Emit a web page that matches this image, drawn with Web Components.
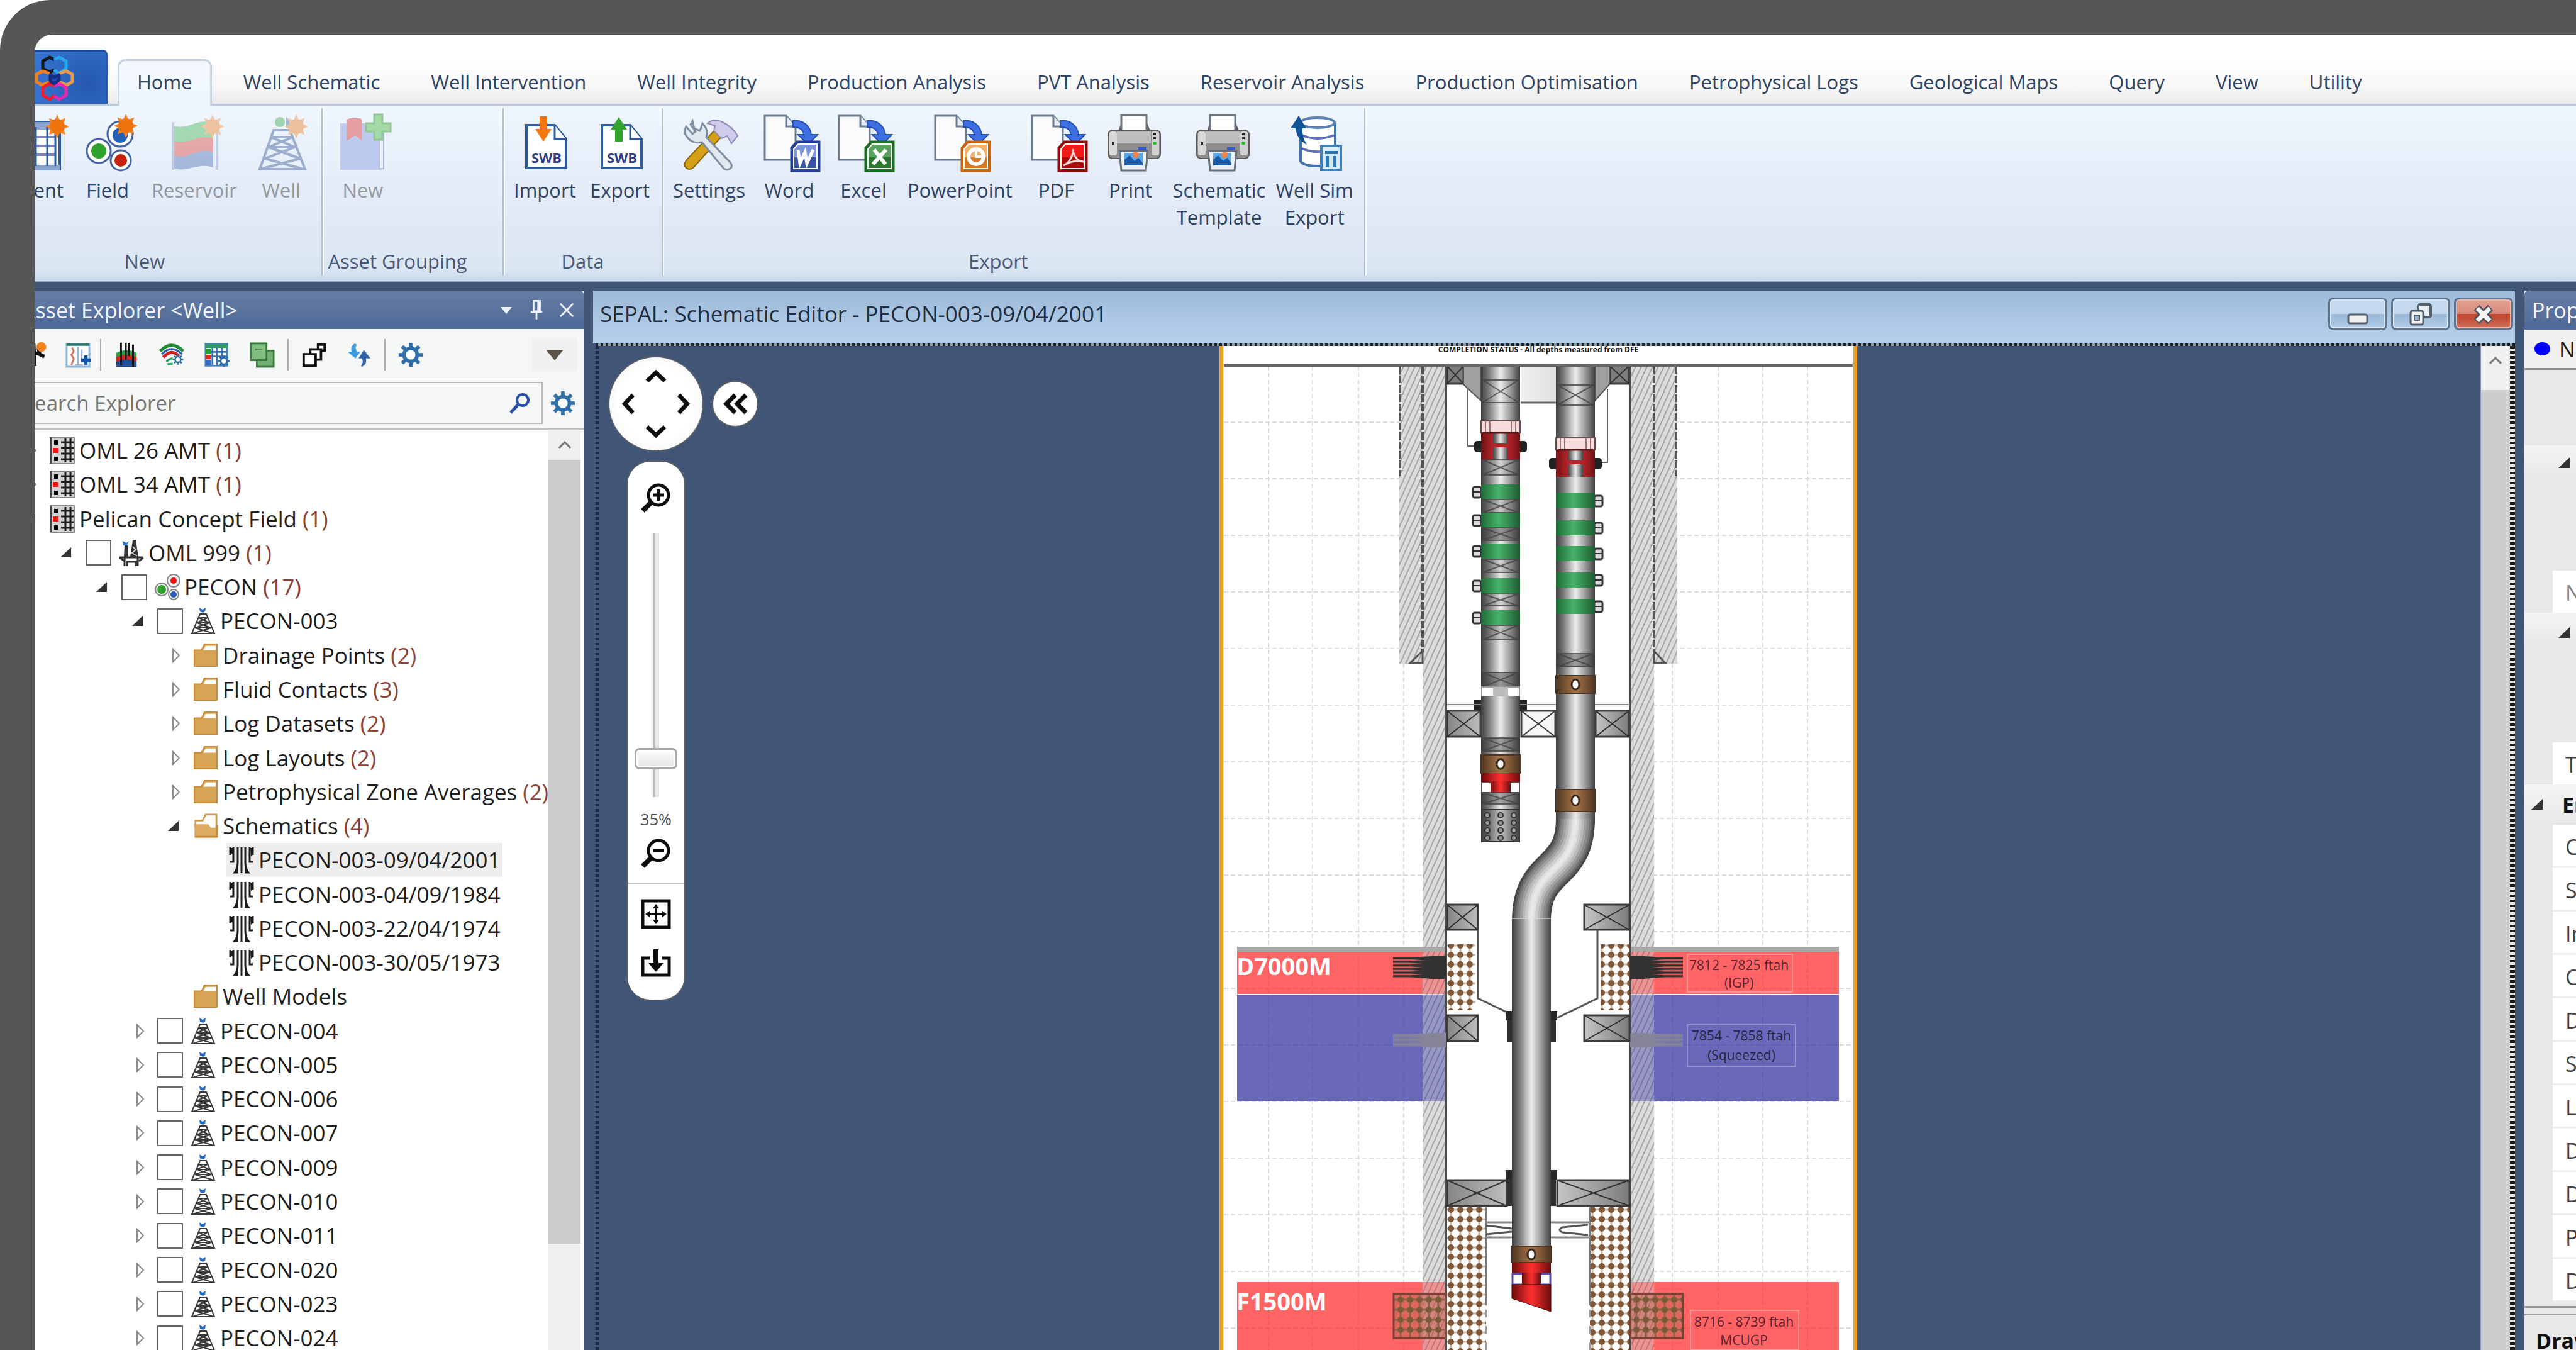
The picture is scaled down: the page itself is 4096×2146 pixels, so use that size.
<!DOCTYPE html>
<html lang="en">
<head>
<meta charset="utf-8">
<title>SEPAL</title>
<style>
	html, body { margin: 0; height: 100%; background: #fff; }
	body { font-family: 'Open Sans', 'Noto Sans', sans-serif; overflow: hidden; }
</style>
</head>
<body>
<sepal-app></sepal-app>

<script>
const sun = (x, y, r = 12) => {
	let rays = '';
	for (let a = 0; a < 8; a++) {
		rays += `<path d="M-4 ${-r + 2}L0 ${-r - 7}L4 ${-r + 2}z" transform="translate(${x} ${y}) rotate(${a * 45})" fill="#f58220"/>`;
	}
	return `${rays}<circle cx="${x}" cy="${y}" r="${r}" fill="#f0740c"/>`;
};

const gear = (x, y, s, color = '#2f6ea8') => {
	let teeth = '';
	for (let a = 0; a < 8; a++) {
		teeth += `<rect x="-3" y="-20" width="6" height="9" transform="rotate(${a * 45})" fill="${color}"/>`;
	}
	return `<g transform="translate(${x} ${y}) scale(${s})">${teeth}<circle r="11" fill="#fff" stroke="${color}" stroke-width="6"/></g>`;
};

const derrick = (color, w = 4) => `
	<g fill="none" stroke="${color}" stroke-width="${w}">
		<path d="M34 25h26L84 87H12zM30 36L68 52M64 36L26 52M26 52L76 70M68 52L20 70M20 70L82 87M76 70L12 87M30 36h34M26 52h42"/>
	</g>`;

const officeDoc = (top, bottom, mark) => `
	<path d="M7 2h34l15 17v53H7z" fill="#fcfcff" stroke="#6c7c90" stroke-width="3"/>
	<path d="M41 2v17h15" fill="#e6ebf5" stroke="#6c7c90" stroke-width="3"/>
	<path d="M52 10c16-2 27 8 29 22h10L76 48 60 32h9c-1-8-6-12-17-12z" fill="#3f6fe0" stroke="#2450b8" stroke-width="2"/>
	<path d="M58 43h36v47H49V53z" fill="${bottom}" stroke="${bottom}" stroke-width="3"/>
	<path d="M60 47h30v39H53V55z" fill="${top}" stroke="#fff" stroke-width="2"/>
	<path d="M54 68h35v17H54z" fill="${bottom}" opacity=".75"/>
	${mark}`;

const printer = `
	<path d="M26 26l7-18h37l7 18z" fill="#5c5f66"/>
	<path d="M31 1h40v29H31z" fill="#fff" stroke="#6c7580" stroke-width="3"/>
	<rect x="10" y="25" width="83" height="45" rx="7" fill="#8e8e8e" stroke="#5a5a5a" stroke-width="2"/>
	<rect x="24" y="27" width="54" height="19" fill="#bdbdbd"/>
	<rect x="12" y="27" width="12" height="38" rx="4" fill="#d8d8d8"/>
	<rect x="79" y="27" width="12" height="38" rx="4" fill="#d0d0d0"/>
	<path d="M18 44v4M84 30v3M84 36v3" stroke="#222" stroke-width="4"/>
	<path d="M84 43v5" stroke="#2bc62b" stroke-width="5"/>
	<rect x="58" y="52" width="13" height="6" fill="#3355d0"/>
	<path d="M28 58h45l-3 31H31z" fill="#edf1f5" stroke="#66707c" stroke-width="3"/>
	<path d="M36 61h29v20H36z" fill="#58a9e6"/>
	<path d="M36 81V72l8-7 8 9 6-5 7 8v4z" fill="#1f5aa8"/>
	<circle cx="54" cy="64" r="5" fill="#f0824a"/>`;

const swbPage = (arrow) => `
	<path d="M17 17h45l18 22v46H17z" fill="#fff" stroke="#2c5a9c" stroke-width="4"/>
	<path d="M62 17v22h18" fill="#fff" stroke="#2c5a9c" stroke-width="3"/>
	${arrow}
	<text x="49" y="77" text-anchor="middle" font-size="22" font-weight="700" fill="#2c3f86" font-family="Open Sans, sans-serif">SWB</text>`;

const chevron = (d) => `<path d="${d}" fill="none" stroke="#0c0c0c" stroke-width="7"/>`;

// every entry: [viewBox, markup]
const ICONS = {
	'grid-new': ['0 0 92 92', `
		<path d="M4 12h82v75H4z" fill="#fff" stroke="#2c5a9c" stroke-width="4"/>
		<path d="M4 12h82v12H4zM4 80h82v8H4z" fill="#8aa4d0"/>
		<path d="M4 36h76M4 50h76M4 64h76" stroke="#7d82b8" stroke-width="4"/>
		<path d="M26 20v62M48 20v62M66 20v62M79 20v62" stroke="#2c5a9c" stroke-width="3"/>
		${sun(82, 19)}`],
	field: ['0 0 92 92', `
		<g fill="#fff" stroke="#4562a8" stroke-width="3">
			<circle cx="66" cy="31" r="20"/><circle cx="32" cy="58" r="19"/><circle cx="67" cy="73" r="16"/>
		</g>
		<circle cx="66" cy="33" r="12" fill="#2560b8"/><circle cx="32" cy="58" r="12" fill="#2fa12c"/><circle cx="67" cy="73" r="10" fill="#c8210f"/>
		${sun(75, 18)}`],
	reservoir: ['0 0 92 92', `
		<g opacity=".38">
			<path d="M14 18c22 8 38-14 62-4v26c-24-10-40 12-62 4z" fill="#30ad3c"/>
			<path d="M14 42c22 8 38-12 62-4v22c-24-8-40 14-62 6z" fill="#e03028"/>
			<path d="M14 66c22 6 38-14 62-6v24c-24-8-40 8-62 2z" fill="#3a62a8"/>
			<path d="M12 12v76M82 12v76" stroke="#8098c8" stroke-width="4"/>
			${sun(75, 19)}
		</g>`],
	'well-new': ['0 0 92 92', `
		<g opacity=".4">${derrick('#2f4a8c')}
			<circle cx="44" cy="12" r="8" fill="#2fa13c"/><path d="M54 4l8 10-8 8z" fill="#2c5fb4"/>
			${sun(70, 19)}
		</g>`],
	'group-new': ['0 0 92 92', `
		<g opacity=".5">
			<rect x="10" y="14" width="68" height="74" rx="3" fill="#7e95d6"/>
			<rect x="10" y="14" width="62" height="74" fill="#8ea4e0"/>
			<path d="M72 30v56h7V30z" fill="#eef2fa" stroke="#6f8ac8" stroke-width="2"/>
			<path d="M20 12q0-6 6-6h14q5 0 5 6v30l-11-9-14 9z" fill="#e0484a"/>
			<path d="M64 0h13v14h13v13H77v13H64V27H51V14h13z" fill="#5cc04e" stroke="#3c9a34" stroke-width="3"/>
		</g>`],
	'swb-import': ['0 0 92 92', swbPage('<path d="M38 3h12v20h7L44 43 31 23h7z" fill="#f5770f"/>')],
	'swb-export': ['0 0 92 92', swbPage('<path d="M38 43h12V24h7L44 4 31 24h7z" fill="#32a52e"/>')],
	tools: ['0 0 92 92', `
		<path d="M58 22l12 9-49 54q-6 4-11 0t0-12z" fill="#d4a017" stroke="#8a6508" stroke-width="2"/>
		<path d="M44 14q10-9 24-2 16 8 24 22l-10 12-7-12-9 4-12-12 2-8z" fill="#cfcbea" stroke="#8f8ab8" stroke-width="2"/>
		<path d="M20 10l3 12 9 4 4-12q10 10 6 22l38 40q5 6 0 10t-10 0L35 44q-18 4-27-14 0-8 2-11l10 12 5-4-8-11z" fill="#e2e8f0" stroke="#8090a4" stroke-width="3"/>`],
	word: ['0 0 92 92', officeDoc('#7f96da', '#243f94', '<path d="M60 56l3 22 8-18 3 18 10-22" fill="none" stroke="#fff" stroke-width="5"/>')],
	excel: ['0 0 92 92', officeDoc('#58a35c', '#1d6a22', '<path d="M63 56l18 23M82 56L61 79" fill="none" stroke="#fff" stroke-width="6"/>')],
	powerpoint: ['0 0 92 92', officeDoc('#f2b068', '#c8660e', '<circle cx="72" cy="67" r="12" fill="none" stroke="#fff" stroke-width="6"/><path d="M72 56v11h10" fill="none" stroke="#fff" stroke-width="4"/>')],
	pdf: ['0 0 92 92', officeDoc('#ee1c16', '#8c0a0a', '<path d="M57 81c10-4 16-18 15-26 1 12 8 20 17 20-10-3-22 0-32 6z" fill="none" stroke="#ffd8d8" stroke-width="3"/>')],
	printer: ['0 0 92 92', printer],
	database: ['0 0 92 92', `
		<path d="M24 14v60q4 8 28 8t27-8V14" fill="#fff" stroke="#3f74ac" stroke-width="4"/>
		<ellipse cx="51" cy="13" rx="27" ry="8" fill="#fff" stroke="#5a80b8" stroke-width="4"/>
		<path d="M26 33q25 10 51 0M26 54q20 8 38 4" fill="none" stroke="#5d6fb8" stroke-width="4"/>
		<path d="M21 2l12 20h-6q-1 14 7 26-16-8-18-26H8z" fill="#0f5596"/>
		<rect x="57" y="50" width="31" height="38" fill="#d8eaf8" stroke="#3f7fb8" stroke-width="4"/>
		<path d="M63 58h20v5H63zM64 66h5v18h-5zM76 66h5v18h-5z" fill="#2f78b4"/>`],
	logo: ['0 0 66 74', `
		<g fill="none" stroke-width="5" stroke-linejoin="round">
			<path d="M31 8l-7-4-11 6v12l11 6 7-4" stroke="#101820"/>
			<path d="M31 8l8-4 11 6v12l-11 8-8-6" stroke="#28a8f0"/>
			<path d="M24 30L13 26 3 31v12l9 5 12-5" stroke="#f08020"/>
			<path d="M39 30l11-4 10 5v12l-9 5-12-5" stroke="#e89a50"/>
			<path d="M31 50l-7-4-11 6v12l11 7 7-6" stroke="#ee1c2c"/>
			<path d="M31 50l8-4 11 6v12l-11 7-8-6" stroke="#e428b0"/>
			<path d="M25 32l6 4 8-4v8l-8 6-6-4z" stroke="#152c80" fill="#1e49b8"/>
		</g>`],
	caret: ['0 0 20 20', '<path d="M1 5h18L10 16z" fill="currentColor"/>'],
	pin: ['0 0 24 36', '<path d="M7 2h11v18H7zM15 2v18M2 21h20M12 21v13" fill="none" stroke="currentColor" stroke-width="3"/>'],
	close: ['0 0 28 28', '<path d="M3 3l22 22M25 3L3 25" stroke="currentColor" stroke-width="3"/>'],
	'field-small': ['0 0 42 42', '<path d="M12 2l2 38M14 18l10 2M20 10l2 10 8 4" fill="none" stroke="#111" stroke-width="6"/><circle cx="25" cy="8" r="8" fill="#f58220"/>'],
	'log-new': ['0 0 42 42', `
		<path d="M2 3h38v38H2z" fill="#fff" stroke="#8ab4dc" stroke-width="3"/><path d="M2 4h38" stroke="#2c7a74" stroke-width="4"/>
		<path d="M11 9l3 6-4 6 4 7-4 10" fill="none" stroke="#e0705a" stroke-width="3"/><path d="M21 8v31M27 12v22M17 38h12" stroke="#9eb2cc" stroke-width="3"/>
		<path d="M34 22v16M26 30h16" stroke="#1558b0" stroke-width="6"/>`],
	subsurface: ['0 0 42 42', `
		<path d="M4 18q17-9 34 0v8H4z" fill="#28a040"/><path d="M4 25q17-8 34 0v8H4z" fill="#d8261c"/><path d="M4 33q17-8 34 0v8H4z" fill="#204a94"/>
		<path d="M12 1v38M20 1v28M25 1v22M32 4v37" stroke="#111" stroke-width="3"/>`],
	horizons: ['0 0 48 42', `
		<path d="M2 14Q24-8 46 14" fill="none" stroke="#1f8a34" stroke-width="6"/><path d="M5 20Q24 0 44 20" fill="none" stroke="#2b5fae" stroke-width="4"/>
		<path d="M8 26Q24 8 38 24" fill="none" stroke="#d02020" stroke-width="6"/><path d="M14 34q6-6 12-6M16 39l10-1" stroke="#1f9a60" stroke-width="4" fill="none"/>${gear(36, 30, .5)}`],
	'table-cog': ['0 0 44 42', `
		<path d="M2 2h38v38H2z" fill="#fff" stroke="#4a86c6" stroke-width="3"/><path d="M2 2h38v7H2z" fill="#2c9a62"/>
		<path d="M2 16h38M2 24h38M14 9v31M22 9v31M31 9v31" stroke="#3570b4" stroke-width="3"/>
		<path d="M2 10h10v10H2z" fill="#28a032"/><path d="M2 21h10v8H2z" fill="#e8281c"/><path d="M2 30h10v10H2z" fill="#3a6ec0"/>${gear(34, 32, .5)}`],
	copies: ['0 0 42 42', `
		<rect x="12" y="14" width="28" height="27" fill="#6fb06e" stroke="#3d7a3f" stroke-width="3"/>
		<rect x="2" y="2" width="26" height="28" fill="#82bd80" stroke="#3d7a3f" stroke-width="3"/><path d="M9 12h12" stroke="#4d8a4f" stroke-width="3"/>`],
	windows: ['0 0 42 42', `
		<g fill="#fff" stroke="#111" stroke-width="4"><path d="M28 4h11v10H28z"/><path d="M15 12h18v17H15z"/><path d="M4 20h20v19H4z"/></g>`],
	sync: ['0 0 42 42', `
		<path d="M14 2c-7 4-7 10-5 14H2l13 11 8-11h-6c-2-6-2-9 0-12z" fill="#3f9be0"/><path d="M26 41c7-4 8-10 6-14h8L29 13l-9 14h6c2 6 1 9-2 13z" fill="#2f63ac"/>`],
	cog: ['0 0 42 42', gear(21, 21, 1)],
	search: ['0 0 34 34', '<circle cx="22" cy="12" r="9" fill="none" stroke="#2850a8" stroke-width="4"/><path d="M15 19L3 32" stroke="#2850a8" stroke-width="5"/>'],
	up: ['0 0 24 14', '<path d="M3 12l9-9 9 9" fill="none" stroke="#777" stroke-width="3"/>'],
	'tri-open': ['0 0 20 20', '<path d="M19 1v17H1z" fill="#333"/>'],
	'tri-closed': ['0 0 16 26', '<path d="M3 3l10 10L3 23z" fill="#fff" stroke="#8c8c8c" stroke-width="2"/>'],
	concession: ['0 0 40 44', `
		<path d="M1 1h38v42H1z" fill="#d4d4d4" stroke="#888" stroke-width="2"/><path d="M2 1v42" stroke="#444" stroke-width="2"/>
		<path d="M7 6h6v7H7zM7 32h6v7H7z" fill="#000"/><path d="M5 18h9v8H5z" fill="#f01414"/>
		<path d="M25 3v38M33 3v38M18 9h20M18 18h20M18 27h20M18 36h20" stroke="#1c1c1c" stroke-width="3"/>`],
	platform: ['0 0 40 44', `
		<path d="M6 3l6 3 4-3-3 7H7z" fill="#2478d0"/><path d="M9 10h6v18H8zM18 28l4-26h5l4 26z" fill="#333"/>
		<path d="M22 12l5 5-6 5 8 5" fill="none" stroke="#ccc" stroke-width="2"/>
		<path d="M1 29h38M1 29l8 6M9 29v14M13 43v-7h14v7M30 29v14M39 29l-7 6" fill="none" stroke="#333" stroke-width="3"/>`],
	'field-node': ['0 0 40 44', `
		<g fill="#eee" stroke="#888" stroke-width="2"><circle cx="30" cy="12" r="10"/><circle cx="11" cy="26" r="10"/><circle cx="30" cy="34" r="8"/></g>
		<circle cx="30" cy="12" r="5" fill="#f01010"/><circle cx="11" cy="26" r="7" fill="#2fa12c"/><circle cx="30" cy="34" r="5" fill="#2c5fb8"/>`],
	'well-node': ['0 0 40 44', `
		<path d="M15 11h10l13 31H2zM13 17h14M10 25h20M7 33h26M13 17l17 8M27 17l-17 8M10 25l23 8M30 25L7 33M7 33l30 9M33 33L3 42" fill="none" stroke="#3a3a3a" stroke-width="2"/>
		<path d="M14 1l5 3 5-3-1 6-3 2-5-2z" fill="#1f66c4"/>`],
	folder: ['0 0 42 42', '<path d="M2 12h12l5-10h21v37H2z" fill="#d9a356" stroke="#c48a3a" stroke-width="2"/><path d="M21 5h17v7H17z" fill="#fff"/>'],
	'folder-open': ['0 0 42 42', '<path d="M4 12h12l5-10h18v37H4z" fill="#fff" stroke="#d09a4c" stroke-width="3"/><path d="M1 18h24l5 6h9v16H5z" fill="#deab62"/><path d="M4 39h36V20" fill="none" stroke="#c48a3a" stroke-width="3"/>'],
	schematic: ['0 0 40 44', `
		<path d="M2 2v12M7 2v23H2M38 2v12M33 2v23h5M14 2v24q0 10-5 16h6M26 2v24q0 10 5 16h-6M20 2v41" fill="none" stroke="#1c1c1c" stroke-width="3"/>
		<path d="M1 3h5v10l-3-2zM34 3h5v10l-4 3zM14 26q0 10-6 16h7V26zM26 26q0 10 6 16h-7V26z" fill="#1c1c1c"/>`],
	'pan-up': ['0 0 36 24', chevron('M3 20L18 6l15 14')],
	'pan-down': ['0 0 36 24', chevron('M3 4l15 14L33 4')],
	'pan-left': ['0 0 24 36', chevron('M20 3L6 18l14 15')],
	'pan-right': ['0 0 24 36', chevron('M4 3l14 15L4 33')],
	collapse: ['0 0 40 34', chevron('M20 3L6 17l14 14M37 3L23 17l14 14')],
	'zoom-in': ['0 0 48 48', '<circle cx="28" cy="19" r="16" fill="#fff" stroke="#0c0c0c" stroke-width="5"/><path d="M16 31L3 44" stroke="#0c0c0c" stroke-width="8"/><path d="M28 10v18M19 19h18" stroke="#0c0c0c" stroke-width="5"/>'],
	'zoom-out': ['0 0 48 48', '<circle cx="28" cy="19" r="16" fill="#fff" stroke="#0c0c0c" stroke-width="5"/><path d="M16 31L3 44" stroke="#0c0c0c" stroke-width="8"/><path d="M19 19h18" stroke="#0c0c0c" stroke-width="5"/>'],
	fit: ['0 0 48 48', '<path d="M3 3h42v42H3z" fill="#fff" stroke="#0c0c0c" stroke-width="5"/><path d="M24 12v24M12 24h24" stroke="#0c0c0c" stroke-width="3"/><path d="M24 8l5 7H19zM24 40l5-7H19zM7 24l7-5v10zM41 24l-7-5v10z" fill="#0c0c0c"/>'],
	download: ['0 0 48 48', '<path d="M14 16H3v27h42V16H34" fill="none" stroke="#0c0c0c" stroke-width="5"/><path d="M20 2h8v22h8L24 38 12 24h8z" fill="#0c0c0c"/>'],
	minimise: ['0 0 36 40', '<rect x="3" y="21" width="30" height="14" rx="3" fill="#f0f0f0" stroke="#55606e" stroke-width="3"/>'],
	restore: ['0 0 36 40', '<rect x="14" y="5" width="20" height="20" rx="3" fill="#e8eef6" stroke="#55606e" stroke-width="4"/><rect x="2" y="15" width="20" height="22" rx="3" fill="#f0f0f0" stroke="#55606e" stroke-width="3"/><rect x="8" y="22" width="8" height="8" fill="#9ab4d2" stroke="#55606e" stroke-width="2"/>'],
	'caption-close': ['0 0 36 40', '<path d="M7 10l22 22M29 10L7 32" stroke="#4c4c56" stroke-width="12"/><path d="M8 11l20 20M28 11L8 31" stroke="#f4f4f4" stroke-width="7"/>'],
};

class AppIcon extends HTMLElement {
	constructor() {
		super();
		this.attachShadow({ mode: 'open' });
	}

	connectedCallback() {
		const [viewBox, markup] = ICONS[this.getAttribute('name')];
		this.shadowRoot.innerHTML = `
			<style>
				:host { display: block; flex: none; width: 40px; height: 40px; }
				svg { display: block; width: 100%; height: 100%; overflow: visible; }
			</style>
			<svg viewBox="${viewBox}" aria-hidden="true">${markup}</svg>`;
	}
}
customElements.define('app-icon', AppIcon);

class RibbonButton extends HTMLElement {
	constructor() {
		super();
		this.attachShadow({ mode: 'open' });
	}

	connectedCallback() {
		this.shadowRoot.innerHTML = `
			<style>
				:host { display: block; }
				button {
					display: flex; flex-direction: column; align-items: center; gap: 7px;
					min-width: 118px; padding: 0 11px; border: 0; background: none; white-space: nowrap;
					font: inherit; color: #2f4464; line-height: 43px; text-align: center;
				}
				button:disabled { color: #959a9f; }
				:host([tall]) button { padding: 0 8px; }
				:host([cut]) button { align-items: flex-end; }
				app-icon { width: 92px; height: 92px; }
			</style>
			<button${this.hasAttribute('disabled') ? ' disabled' : ''}>
				<app-icon name="${this.getAttribute('icon')}"></app-icon>
				<span><slot></slot></span>
			</button>`;
	}
}

class RibbonGroup extends HTMLElement {
	constructor() {
		super();
		this.attachShadow({ mode: 'open' });
	}

	connectedCallback() {
		this.shadowRoot.innerHTML = `
			<style>
				:host {
					display: flex; flex-direction: column; justify-content: space-between; box-sizing: border-box;
					border-right: 2px solid #b4c0d2; box-shadow: 2px 0 0 #f6faff; padding: 10px 5px 3px;
				}
				.buttons { display: flex; align-items: flex-start; }
				:host([end]) .buttons { justify-content: flex-end; }
				.label { text-align: center; line-height: 40px; color: #48597a; }
				:host([launcher]) .label { padding-right: 48px; }
			</style>
			<div class="buttons"><slot></slot></div>
			<div class="label">${this.getAttribute('label')}</div>`;
	}
}

class RibbonBar extends HTMLElement {
	constructor() {
		super();
		this.attachShadow({ mode: 'open' });
		const tabs = ['Home', 'Well Schematic', 'Well Intervention', 'Well Integrity', 'Production Analysis', 'PVT Analysis',
			'Reservoir Analysis', 'Production Optimisation', 'Petrophysical Logs', 'Geological Maps', 'Query', 'View', 'Utility'];

		this.shadowRoot.innerHTML = `
			<style>
				:host { display: block; font-size: 31px; color: #2f4464; }
				.strip {
					display: flex; align-items: flex-end; height: 110px; border-bottom: 3px solid #bccadb;
					background: linear-gradient(#fff 40%, #f7f7f7 75%, #ececec);
				}
				.app {
					width: 116px; height: 86px; margin-right: 16px; padding: 0; border: 0; border-top: 3px solid #1c459c;
					border-right: 2px solid #2a56ac; border-radius: 0 8px 0 0;
					background: radial-gradient(circle at 75% 60%, #2458ae, #3a78d4);
				}
				.app app-icon { width: 66px; height: 74px; }
				nav { display: flex; align-items: flex-end; gap: 19px; }
				nav button {
					height: 71px; padding: 0 28px 2px; border: 3px solid transparent; border-bottom: 0; border-radius: 12px 12px 0 0;
					background: none; font: inherit; color: inherit; white-space: nowrap; box-sizing: border-box; line-height: 43px;
				}
				nav button[aria-selected='true'] { height: 74px; padding-bottom: 5px; margin-bottom: -3px; border-color: #c4d2e2; background: linear-gradient(#f4f9fe, #edf5fd); }
				.body {
					display: flex; height: 280px; padding: 4px 0 9px; box-sizing: border-box;
					background: linear-gradient(#eff6fe, #e4ecf8 45%, #dae6f2 93%, #c8d8ec); border-bottom: 1px solid #8fa4c4;
				}
				.first { margin-left: -106px; width: 564px; }
				.assets { width: 288px; }
				.data { width: 253px; }
				.export { width: 1117px; }
			</style>
			<div class="strip">
				<button class="app" aria-label="Application menu"><app-icon name="logo"></app-icon></button>
				<nav role="tablist">
					${tabs.map((t, i) => `<button role="tab" aria-selected="${i === 0}">${t}</button>`).join('')}
				</nav>
			</div>
			<div class="body">
				<ribbon-group class="first" label="New" end>
					<ribbon-button icon="grid-new" cut>ent</ribbon-button>
					<ribbon-button icon="field">Field</ribbon-button>
					<ribbon-button icon="reservoir" disabled>Reservoir</ribbon-button>
					<ribbon-button icon="well-new" disabled>Well</ribbon-button>
				</ribbon-group>
				<ribbon-group class="assets" label="Asset Grouping" launcher>
					<ribbon-button icon="group-new" disabled>New</ribbon-button>
				</ribbon-group>
				<ribbon-group class="data" label="Data">
					<ribbon-button icon="swb-import">Import</ribbon-button>
					<ribbon-button icon="swb-export">Export</ribbon-button>
				</ribbon-group>
				<ribbon-group class="export" label="Export" launcher>
					<ribbon-button icon="tools">Settings</ribbon-button>
					<ribbon-button icon="word">Word</ribbon-button>
					<ribbon-button icon="excel">Excel</ribbon-button>
					<ribbon-button icon="powerpoint">PowerPoint</ribbon-button>
					<ribbon-button icon="pdf">PDF</ribbon-button>
					<ribbon-button icon="printer">Print</ribbon-button>
					<ribbon-button icon="printer" tall>Schematic<br>Template</ribbon-button>
					<ribbon-button icon="database" tall>Well Sim<br>Export</ribbon-button>
				</ribbon-group>
			</div>`;
	}
}
customElements.define('ribbon-button', RibbonButton);
customElements.define('ribbon-group', RibbonGroup);
customElements.define('ribbon-bar', RibbonBar);

class ScrollStrip extends HTMLElement {
	constructor() {
		super();
		this.attachShadow({ mode: 'open' });
		this.shadowRoot.innerHTML = `
			<style>
				:host { display: flex; flex-direction: column; background: #f0f0f0; }
				button { height: 48px; padding: 0; border: 0; background: none; display: grid; place-items: center; }
				app-icon { width: 24px; height: 14px; }
				.thumb { background: #cdcdcd; margin-top: var(--thumb-start, 0px); height: var(--thumb-size, 100%); }
			</style>
			<button aria-label="Scroll up"><app-icon name="up"></app-icon></button>
			<div class="thumb"></div>`;
	}
}
customElements.define('scroll-strip', ScrollStrip);

class TreeRow extends HTMLElement {
	constructor() {
		super();
		this.attachShadow({ mode: 'open' });
	}

	set data({ level, state, check, icon, text, count, selected }) {
		const arrow = state ? `<app-icon class="${state}" name="tri-${state}"></app-icon>` : '';
		this.shadowRoot.innerHTML = `
			<style>
				:host { display: flex; align-items: center; gap: 12px; padding-left: ${level * 57}px; white-space: nowrap; }
				.arrow { width: 40px; display: grid; place-items: center; flex: none; }
				.open { width: 19px; height: 19px; }
				.closed { width: 16px; height: 26px; margin-left: 10px; }
				label { display: flex; align-items: center; gap: 12px; height: 100%; }
				input { appearance: none; width: 41px; height: 41px; margin: 0; background: #fff; border: 2px solid #666; }
				.item { display: flex; align-items: center; gap: 7px; height: 100%; padding: 0 4px; margin: 0 -4px; }
				.item app-icon { height: 44px; }
				.selected { background: #eee; }
				.count { color: #8f4034; }
			</style>
			<span class="arrow">${arrow}</span>
			<label>
				${check ? '<input type="checkbox">' : ''}
				<span class="item${selected ? ' selected' : ''}">
					<app-icon name="${icon}"></app-icon>
					<span>${text}${count ? ` <span class="count">(${count})</span>` : ''}</span>
				</span>
			</label>`;
	}
}
customElements.define('tree-row', TreeRow);

const well = (text, state = 'closed') => ({ level: 3, state, check: true, icon: 'well-node', text });
const folder = (text, count, state = 'closed') => ({ level: 4, state, icon: state === 'open' ? 'folder-open' : 'folder', text, count });
const sheet = (text, selected) => ({ level: 5, icon: 'schematic', text, selected });

const TREE = [
	{ level: 0, state: 'closed', icon: 'concession', text: 'OML 26 AMT', count: 1 },
	{ level: 0, state: 'closed', icon: 'concession', text: 'OML 34 AMT', count: 1 },
	{ level: 0, state: 'open', icon: 'concession', text: 'Pelican Concept Field', count: 1 },
	{ level: 1, state: 'open', check: true, icon: 'platform', text: 'OML 999', count: 1 },
	{ level: 2, state: 'open', check: true, icon: 'field-node', text: 'PECON', count: 17 },
	well('PECON-003', 'open'),
	folder('Drainage Points', 2),
	folder('Fluid Contacts', 3),
	folder('Log Datasets', 2),
	folder('Log Layouts', 2),
	folder('Petrophysical Zone Averages', 2),
	folder('Schematics', 4, 'open'),
	sheet('PECON-003-09/04/2001', true),
	sheet('PECON-003-04/09/1984'),
	sheet('PECON-003-22/04/1974'),
	sheet('PECON-003-30/05/1973'),
	folder('Well Models', 0, ''),
	...['004', '005', '006', '007', '009', '010', '011', '020', '023', '024'].map((n) => well(`PECON-${n}`)),
];

class AssetExplorer extends HTMLElement {
	constructor() {
		super();
		this.attachShadow({ mode: 'open' });
		const tool = (name, label) => `<button aria-label="${label}"><app-icon name="${name}"></app-icon></button>`;

		this.shadowRoot.innerHTML = `
			<style>
				:host { display: flex; flex-direction: column; background: #f5f6f6; font-size: 33px; overflow: hidden; }
				button { border: 0; padding: 0; background: none; display: grid; place-items: center; }
				header {
					display: flex; align-items: center; height: 61px; padding-right: 3px; color: #eef2fa; flex: none;
					background: linear-gradient(#667ca3, #4f6a99); border-radius: 0 6px 0 0;
				}
				h2 { flex: 1; margin: 0 0 0 -20px; font-size: 34px; font-weight: 400; line-height: 44px; white-space: nowrap; }
				header button { color: inherit; width: 48px; height: 48px; }
				.caret { width: 20px; height: 20px; }
				.pin { width: 22px; height: 34px; }
				.close { width: 26px; height: 26px; }
				.tools { display: flex; align-items: center; height: 82px; margin-left: -24px; padding: 0 10px 2px 0; flex: none; }
				.tools button { width: 72px; height: 50px; }
				.tools button.near { width: 62px; }
				.tools hr { width: 2px; height: 50px; margin: 0 4px; border: 0; background: #aaa; }
				.tools .more { margin-left: auto; background: #f0f0f0; color: #5c5246; }
				.more app-icon { width: 30px; height: 30px; }
				.search { display: flex; align-items: center; gap: 12px; margin: 0 13px 6px -30px; flex: none; }
				.box { flex: 1; display: flex; align-items: center; height: 63px; border: 2px solid #b8b8b8; }
				input { flex: 1; border: 0; outline: 0; background: none; font: inherit; padding: 0 10px; color: #333; }
				input::placeholder { color: #747474; opacity: 1; }
				.box button { width: 50px; height: 50px; margin-right: 10px; }
				.box app-icon { width: 34px; height: 34px; }
				.content { display: flex; flex: 1; min-height: 0; border-top: 3px solid #c0c0c0; background: #fff; }
				.tree { flex: 1; display: flex; flex-direction: column; margin: 6px 0 -8px -28px; font-size: 35px; color: #1e1e1e; line-height: 54px; }
				tree-row { flex: 1 1 0; min-height: 0; }
				scroll-strip { width: 51px; margin-right: 5px; --thumb-size: 1246px; }
			</style>
			<header>
				<h2>Asset Explorer &lt;Well&gt;</h2>
				<button aria-label="Window position"><app-icon class="caret" name="caret"></app-icon></button>
				<button aria-label="Auto hide"><app-icon class="pin" name="pin"></app-icon></button>
				<button aria-label="Close"><app-icon class="close" name="close"></app-icon></button>
			</header>
			<div class="tools">
				<button class="near" aria-label="New asset"><app-icon name="field-small"></app-icon></button>
				<button class="near" aria-label="New log"><app-icon name="log-new"></app-icon></button>
				<hr>
				${tool('subsurface', 'Subsurface')}${tool('horizons', 'Horizons')}${tool('table-cog', 'Table setup')}${tool('copies', 'Copies')}
				<hr>
				${tool('windows', 'Windows')}${tool('sync', 'Refresh')}
				<hr>
				${tool('cog', 'Options')}
				<button class="more" aria-label="More"><app-icon name="caret"></app-icon></button>
			</div>
			<div class="search">
				<div class="box">
					<input type="text" placeholder="Search Explorer" aria-label="Search Explorer">
					<button aria-label="Search"><app-icon name="search"></app-icon></button>
				</div>
				<button aria-label="Search options"><app-icon name="cog"></app-icon></button>
			</div>
			<div class="content">
				<div class="tree"></div>
				<scroll-strip></scroll-strip>
			</div>`;

		const tree = this.shadowRoot.querySelector('.tree');
		TREE.forEach((node) => {
			const row = document.createElement('tree-row');
			row.data = node;
			tree.append(row);
		});
	}
}
customElements.define('asset-explorer', AssetExplorer);

// ---- well schematic drawing helpers ----
const LEFT = 2355;
const RIGHT = 2474;
const LOWER = 2404;
const W = 62;

const rect = (x, y, w, h, fill, extra = '') => `<rect x="${x}" y="${y}" width="${w}" height="${h}" fill="${fill}" ${extra}/>`;
const line = (d, color = '#555', w = 2, extra = '') => `<path d="${d}" fill="none" stroke="${color}" stroke-width="${w}" ${extra}/>`;
const tube = (x, y1, y2) => rect(x, y1, W, y2 - y1, 'url(#steel)');
const nipple = (x, y1, y2, dark = 0) => `
	${rect(x, y1, W, y2 - y1, '#333', `opacity="${dark}"`)}
	${line(`M${x} ${y1}h${W}M${x} ${y2}h${W}M${x + 2} ${y1}L${x + W - 2} ${y2}M${x + W - 2} ${y1}L${x + 2} ${y2}`, '#444', 2, 'opacity=".8"')}`;
const mandrel = (x, y, side) => {
	const lug = side < 0 ? x - 13 : x + W - 1;
	return `${rect(lug, y + 4, 13, 17, '#ddd', 'rx="3" stroke="#333" stroke-width="3"')}
		${line(`M${lug} ${y + 12}h13`, '#333', 2)}${rect(x, y, W, 24, 'url(#green)')}`;
};
const valve = (x, y) => `
	${rect(x - 11, y + 32, W + 22, 18, '#222', 'rx="5"')}
	${rect(x, y, W, 19, '#f6dcdc', 'stroke="#6b4a4a" stroke-width="2"')}
	${line(`M${x + 7} ${y}v19M${x + 14} ${y}v19M${x + W - 14} ${y}v19M${x + W - 7} ${y}v19`, '#9c7070')}
	${rect(x, y + 19, W, 43, 'url(#darkred)')}
	${rect(x + 19, y + 19, 24, 43, 'url(#steel)')}${rect(x + 19, y + 36, 24, 6, '#b4242a')}
	${line(`M${x + 3} ${y + 19}h${W - 6}`, '#5a1414', 3)}`;
const port = (x, y1, y2) => `
	${rect(x, y1, W, y2 - y1, 'url(#brown)', 'stroke="#4a3524" stroke-width="2"')}
	<ellipse cx="${x + W / 2}" cy="${(y1 + y2) / 2}" rx="6" ry="8" fill="#fff" stroke="#3a2a1c" stroke-width="3"/>`;
const packer = (x, y, w, h, fill) => `
	${rect(x, y, w, h, fill, 'stroke="#3c3c3c" stroke-width="3"')}
	${line(`M${x} ${y}L${x + w} ${y + h}M${x + w} ${y}L${x} ${y + h}`, '#333')}`;
const collar = (y1, y2) => `
	${rect(LOWER - 10, y1, W + 20, 15, '#262626')}${rect(LOWER - 8, y1 + 15, W + 16, y2 - y1 - 15, '#303030')}`;
const perforations = (x, dir, y, h, color, n, haze = .2) => {
	let out = '';
	const step = h / n;
	for (let i = 0; i < n; i++) {
		const top = y + i * step;
		out += `<path d="M${x} ${top - 1}H${x + dir * 22}L${x + dir * 56} ${top + step / 2 - 2}H${x + dir * 84}v3H${x + dir * 56}L${x + dir * 22} ${top + step + 1}H${x}z"/>`;
	}
	return `<g fill="${color}">${out}${rect(Math.min(x, x + dir * 84), y, 84, h, color, `opacity="${haze}"`)}</g>`;
};
const note = (x, y, w, h, cx, lines, color) => `
	${rect(x, y, w, h, 'none', 'stroke="#fff" stroke-opacity=".3" stroke-width="2"')}
	${lines.map(([t, ty]) => `<text x="${cx}" y="${ty}" text-anchor="middle" font-size="21" fill="${color}">${t}</text>`).join('')}`;
const bend = (() => {
	const shades = [[62, '#454545'], [56, '#5c5c5c'], [50, '#747474'], [44, '#8a8a8a'], [36, '#a0a0a0'], [28, '#b8b8b8'], [20, '#cccccc'], [12, '#dedede'], [6, '#e8e8e8']];
	return shades.map(([w, c]) => line('M2505 1300C2505 1392 2435 1368 2435 1462', c, w)).join('');
})();
const range = (start, step, n) => Array.from({ length: n }, (_, i) => start + i * step);

class WellSchematic extends HTMLElement {
	constructor() {
		super();
		this.attachShadow({ mode: 'open' });
		this.shadowRoot.innerHTML = `
			<style>
				:host { display: block; overflow: hidden; background: #fff; }
				svg { display: block; width: 1014px; height: 1598px; }
				text { font-family: 'Open Sans', sans-serif; }
			</style>
			<svg viewBox="1939 548 1014 1598" role="img" aria-label="Well schematic">
				<defs>
					<linearGradient id="steel"><stop offset="0" stop-color="#3f3f3f"/><stop offset=".2" stop-color="#7c7c7c"/><stop offset=".5" stop-color="#ececec"/><stop offset=".8" stop-color="#8a8a8a"/><stop offset="1" stop-color="#3f3f3f"/></linearGradient>
					<linearGradient id="green"><stop offset="0" stop-color="#1c6a36"/><stop offset=".45" stop-color="#48b468"/><stop offset="1" stop-color="#1d5c32"/></linearGradient>
					<linearGradient id="darkred"><stop offset="0" stop-color="#6e1214"/><stop offset=".3" stop-color="#b4242a"/><stop offset=".7" stop-color="#b4242a"/><stop offset="1" stop-color="#6e1214"/></linearGradient>
					<linearGradient id="red"><stop offset="0" stop-color="#6a0c0c"/><stop offset=".5" stop-color="#ff3030"/><stop offset="1" stop-color="#6a0c0c"/></linearGradient>
					<linearGradient id="brown"><stop offset="0" stop-color="#4e3521"/><stop offset=".5" stop-color="#a87648"/><stop offset="1" stop-color="#4e3521"/></linearGradient>
					<linearGradient id="box"><stop offset="0" stop-color="#858585"/><stop offset="1" stop-color="#bdbdbd"/></linearGradient>
					<linearGradient id="boxr"><stop offset="0" stop-color="#c6c6c6"/><stop offset="1" stop-color="#7c7c7c"/></linearGradient>
					<pattern id="hatch" width="9" height="20" patternUnits="userSpaceOnUse"><rect width="9" height="20" fill="#dcdcdc"/><path d="M-2 24L11 -4M-11 24L2 -4M7 24L20 -4" stroke="#a6a6a6" stroke-width="2"/></pattern>
					<pattern id="gravel" x="2299" y="1494" width="15" height="15" patternUnits="userSpaceOnUse"><rect width="15" height="15" fill="#fff"/><path d="M0 7h15M8 0v15" stroke="#cdb8a6" stroke-width="3"/><ellipse cx="8" cy="7" rx="5" ry="5" fill="#80583a"/></pattern>
					<pattern id="pack" x="2219" y="2055" width="15" height="16" patternUnits="userSpaceOnUse"><rect width="15" height="16" fill="#a0684e" fill-opacity=".35"/><path d="M0 9h15M8 0v16" stroke="#8e6248" stroke-width="3"/><ellipse cx="8" cy="9" rx="5" ry="5" fill="#7c5a38"/></pattern>
				</defs>
				${rect(1939, 548, 1014, 1598, '#fff')}
				<g stroke="#dcdcdc" stroke-width="2" stroke-dasharray="7 4">
					${[2017, 2087, 2160, 2232, 2659, 2732, 2803, 2874].map((x) => `<path d="M${x} 580V2146"/>`).join('')}
					${range(669, 90, 17).map((y) => `<path d="M1946 ${y}H2946"/>`).join('')}
				</g>
				${line('M1942 548V2146M2950 548V2146', '#f2a01e', 6)}
				<text x="2446" y="558" text-anchor="middle" font-size="12" font-weight="700" fill="#111">COMPLETION STATUS - All depths measured from DFE</text>

				${rect(2224, 580, 38, 473, 'url(#hatch)')}${rect(2630, 580, 37, 473, 'url(#hatch)')}
				${rect(2262, 580, 36, 1566, 'url(#hatch)')}${rect(2594, 580, 36, 1566, 'url(#hatch)')}
				${rect(1967, 1503, 957, 8, '#a8a8a8')}
				${rect(1967, 1511, 957, 67, '#ff2a2a', 'opacity=".72"')}
				${rect(1967, 1579, 957, 169, '#3a38a4', 'opacity=".76"')}
				${rect(1967, 2036, 957, 110, '#ff2a2a', 'opacity=".72"')}
				<g opacity=".45">${rect(2262, 1511, 36, 237, 'url(#hatch)')}${rect(2594, 1511, 36, 237, 'url(#hatch)')}${rect(2262, 2036, 36, 110, 'url(#hatch)')}${rect(2594, 2036, 36, 110, 'url(#hatch)')}</g>
				${rect(2300, 580, 292, 1566, '#fff')}
				${line('M2226 580V755M2665 580V755', '#555', 4, 'stroke-dasharray="12 3"')}
				${line('M2262 580V1035M2630 580V1035', '#555', 4, 'stroke-dasharray="12 3"')}
				${line('M2262 1033v19h-20zM2630 1033v19h18z', '#555', 3)}
				${line('M2299 580V2146M2592 580V2146', '#4a4a4a', 4)}

				<text x="1966" y="1548" font-size="38" font-weight="700" fill="#fff">D7000M</text>
				<text x="1966" y="2081" font-size="38" font-weight="700" fill="#fff">F1500M</text>
				${perforations(2299, -1, 1519, 34, '#333', 6)}
				${perforations(2592, 1, 1519, 34, '#333', 6)}
				${perforations(2299, -1, 1641, 21, '#86849a', 3, .6)}
				${perforations(2592, 1, 1641, 21, '#86849a', 3, .6)}
				${note(2683, 1515, 167, 60, 2765, [['7812 - 7825 ftah', 1540], ['(IGP)', 1568]], '#5c2030')}
				${note(2683, 1627, 172, 66, 2769, [['7854 - 7858 ftah', 1652], ['(Squeezed)', 1683]], '#25253f')}
				${note(2688, 2081, 172, 62, 2773, [['8716 - 8739 ftah', 2107], ['MCUGP', 2136]], '#5c2030')}
				${rect(2216, 2055, 84, 70, 'url(#pack)', 'stroke="#7a4034" stroke-width="3"')}
				${rect(2592, 2055, 84, 70, 'url(#pack)', 'stroke="#7a4034" stroke-width="3"')}

				${packer(2301, 580, 26, 28, '#7c7c7c')}${packer(2560, 580, 30, 28, '#7c7c7c')}
				<path d="M2327 580h28v55l-28-26z" fill="#a0a0a0" stroke="#555" stroke-width="2"/>
				<path d="M2536 580h23v29l-23 26z" fill="#a0a0a0" stroke="#555" stroke-width="2"/>
				${rect(2418, 580, 56, 57, 'url(#boxr)', 'opacity=".25"')}${line('M2418 638h56', '#666', 3)}
				${line('M2334 616v91h12M2556 616v117h-10', '#666')}

				${tube(LEFT, 580, 1090)}
				${nipple(LEFT, 602, 638)}
				${valve(LEFT, 667)}
				${nipple(LEFT, 729, 753, .15)}
				${[768, 813, 862, 917, 968].map((y) => mandrel(LEFT, y, -1)).join('')}
				${nipple(LEFT, 792, 813, .2)}${nipple(LEFT, 837, 857, .45)}${nipple(LEFT, 887, 908, .15)}${nipple(LEFT, 942, 961, .1)}${nipple(LEFT, 992, 1015, .2)}
				${nipple(LEFT, 1067, 1090, .45)}
				${rect(2356, 1090, 60, 15, '#fff', 'stroke="#999" stroke-width="2"')}${rect(2374, 1090, 24, 15, '#bbb')}
				${rect(2344, 1110, 84, 19, '#222')}

				${packer(2301, 1128, 53, 41, 'url(#box)')}${packer(2419, 1128, 54, 41, '#f6f6f6')}${packer(2537, 1128, 53, 41, 'url(#boxr)')}
				${line('M2301 1118h290', '#888')}
				${tube(LEFT, 1105, 1242)}
				${nipple(LEFT, 1171, 1192, .4)}
				${port(LEFT, 1198, 1227)}
				${rect(LEFT, 1227, W, 15, 'url(#red)')}${rect(2356, 1242, 60, 16, '#fff', 'stroke="#555" stroke-width="2"')}${rect(2370, 1240, 32, 18, 'url(#red)')}
				${tube(LEFT, 1258, 1337)}${nipple(LEFT, 1258, 1276, .35)}
				${rect(LEFT, 1285, W, 52, '#222', 'opacity=".2"')}
				<g fill="#999" stroke="#333" stroke-width="2">
					${range(1294, 12, 4).map((y) => `<circle cx="2365" cy="${y}" r="4"/><circle cx="2386" cy="${y}" r="4"/><circle cx="2407" cy="${y}" r="4"/>`).join('')}
				</g>
				${line('M2355 1285h62M2355 1336h62', '#333')}

				${tube(RIGHT, 580, 1308)}
				${nipple(RIGHT, 610, 642)}
				${valve(RIGHT, 694)}
				${[782, 825, 866, 908, 950].map((y) => mandrel(RIGHT, y, 1)).join('')}
				${nipple(RIGHT, 1037, 1058, .4)}
				${port(RIGHT, 1072, 1100)}${port(RIGHT, 1253, 1288)}
				${bend}
				${line('M2404 1458h62', '#ddd', 2, 'opacity=".6"')}

				${packer(2301, 1436, 49, 40, 'url(#box)')}${packer(2519, 1436, 72, 40, 'url(#boxr)')}
				${rect(2301, 1499, 45, 105, 'url(#gravel)')}${rect(2545, 1499, 46, 105, 'url(#gravel)')}
				${line('M2350 1476v109l46 22M2540 1476v109l-64 31', '#555', 3)}
				${packer(2301, 1612, 49, 41, 'url(#box)')}${packer(2519, 1612, 72, 41, 'url(#boxr)')}
				${packer(2301, 1874, 95, 41, 'url(#box)')}${packer(2476, 1874, 115, 41, 'url(#boxr)')}
				${rect(2301, 1917, 62, 229, 'url(#gravel)')}${rect(2528, 1917, 63, 229, 'url(#gravel)')}
				${line('M2363 1917V2073M2528 1917V2073', '#777')}${line('M2363 2080V2146M2528 2080V2146', '#999', 2, 'stroke-dasharray="12 14"')}
				${line('M2363 1941h165M2363 1965h165', '#888', 3)}
				${line('M2363 1946l41 5M2363 1960l41-4M2525 1945l-41 4q-8 4 0 8l41 4', '#555', 3)}
				${collar(1605, 1654)}${collar(1858, 1915)}
				${tube(LOWER, 1459, 1979)}
				${port(LOWER, 1979, 2005)}
				${rect(LOWER, 2005, W, 18, 'url(#red)')}
				${rect(2405, 2023, 60, 17, '#fff', 'stroke="#554aa8" stroke-width="3"')}${rect(2420, 2021, 30, 19, 'url(#red)')}
				<path d="M2404 2040h62v43l-62-21z" fill="url(#red)" stroke="#400" stroke-width="1"/>
				${line('M1946 579H2946', '#666', 4)}
			</svg>`;
	}
}
customElements.define('well-schematic', WellSchematic);

class ViewNavigator extends HTMLElement {
	constructor() {
		super();
		this.attachShadow({ mode: 'open' });
		this.shadowRoot.innerHTML = `
			<style>
				:host { display: grid; grid-template-columns: 148px 70px; column-gap: 17px; row-gap: 18px; align-items: center; justify-items: center; }
				button { border: 0; padding: 0; background: none; display: grid; place-items: center; }
				.pan, .fold, .zoom { background: #fff; box-shadow: 0 0 3px 1px #6d6a62; }
				.pan {
					display: grid; grid-template: 'a u b' 1fr 'l c r' 1fr 'd n e' 1fr / 1fr 1fr 1fr;
					width: 148px; height: 148px; padding: 8px; box-sizing: border-box; border-radius: 50%;
					background: radial-gradient(#fff 55%, #eee);
				}
				.pan app-icon { width: 34px; height: 24px; }
				.pan .side { width: 24px; height: 34px; }
				.fold { width: 70px; height: 70px; border-radius: 50%; }
				.zoom { display: flex; flex-direction: column; align-items: center; width: 90px; padding: 34px 0; box-sizing: border-box; border-radius: 36px; }
				.zoom app-icon { width: 48px; height: 48px; }
				input {
					appearance: none; writing-mode: vertical-lr; direction: rtl; width: 68px; height: 419px; margin: 32px 0 18px;
					background: linear-gradient(90deg, #bbb 4px, #e6e6e6 4px) center / 10px 100% no-repeat;
				}
				input::-webkit-slider-thumb {
					appearance: none; width: 68px; height: 34px; box-sizing: border-box; border: 3px solid #a8a8a8; border-radius: 8px;
					background: linear-gradient(#fff, #e2e2e2); box-shadow: inset 0 0 0 3px #fff;
				}
				output { font-size: 25px; line-height: 34px; color: #444; margin-bottom: 14px; }
				hr { width: 100%; height: 2px; margin: 22px 0 24px; border: 0; background: #c4c4c4; }
				.save { margin-top: 30px; }
			</style>
			<div class="pan">
				<button style="grid-area: u" aria-label="Pan up"><app-icon name="pan-up"></app-icon></button>
				<button style="grid-area: l" aria-label="Pan left"><app-icon class="side" name="pan-left"></app-icon></button>
				<button style="grid-area: r" aria-label="Pan right"><app-icon class="side" name="pan-right"></app-icon></button>
				<button style="grid-area: n" aria-label="Pan down"><app-icon name="pan-down"></app-icon></button>
			</div>
			<button class="fold" aria-label="Collapse"><app-icon name="collapse"></app-icon></button>
			<div class="zoom">
				<button aria-label="Zoom in"><app-icon name="zoom-in"></app-icon></button>
				<input id="level" type="range" min="1" max="300" value="35" aria-label="Zoom level">
				<output for="level">35%</output>
				<button aria-label="Zoom out"><app-icon name="zoom-out"></app-icon></button>
				<hr>
				<button aria-label="Fit to window"><app-icon name="fit"></app-icon></button>
				<button class="save" aria-label="Save view"><app-icon name="download"></app-icon></button>
			</div>`;
	}

	connectedCallback() {
		const input = this.shadowRoot.querySelector('input');
		input.addEventListener('input', () => {
			this.shadowRoot.querySelector('output').textContent = `${input.value}%`;
		});
	}
}
customElements.define('view-navigator', ViewNavigator);

class SchematicEditor extends HTMLElement {
	constructor() {
		super();
		this.attachShadow({ mode: 'open' });
		this.shadowRoot.innerHTML = `
			<style>
				:host { display: flex; flex-direction: column; min-width: 0; background: #415577; }
				header {
					display: flex; align-items: center; gap: 6px; height: 84px; padding: 0 3px 10px 11px; flex: none;
					background: linear-gradient(#9dbad8, #b6d1ec); color: #1f2d40; box-sizing: border-box;
				}
				h2 { flex: 1; margin: 0; font-size: 35px; font-weight: 400; line-height: 44px; }
				header button {
					width: 94px; height: 52px; padding: 0; display: grid; place-items: center; border: 3px solid #5f7590; border-radius: 8px;
					background: linear-gradient(#c4d8ee 50%, #98b6d6 50%, #b4cde8); box-shadow: inset 0 0 0 2px #dbe8f6;
				}
				header .close { background: linear-gradient(#e2a294, #d98a78 50%, #bd4028 50%, #d0705a); box-shadow: inset 0 0 0 2px #eab8ac; }
				header app-icon { width: 36px; height: 40px; }
				.frame {
					flex: 1; min-height: 0; display: grid; grid-template: 4px 1fr / 5px 1fr 47px 8px; margin-left: 4px;
				}
				.top { grid-column: 1 / -1; z-index: 1; background: repeating-linear-gradient(90deg, #1c2230 0 4px, #8c99a0 4px 8px); }
				.left { background: repeating-linear-gradient(#1f2a3c 0 4px, #415577 4px 8px); }
				.right { background: repeating-linear-gradient(#222 0 4px, #e4e6e0 4px 8px); }
				.canvas { position: relative; display: flex; justify-content: center; overflow: hidden; padding-right: 4px; }
				view-navigator { position: absolute; left: 17px; top: 18px; }
				scroll-strip { --thumb-start: 24px; border-left: 1px solid #8a93b8; }
			</style>
			<header>
				<h2>SEPAL: Schematic Editor - PECON-003-09/04/2001</h2>
				<button aria-label="Minimise"><app-icon name="minimise"></app-icon></button>
				<button aria-label="Restore"><app-icon name="restore"></app-icon></button>
				<button class="close" aria-label="Close"><app-icon name="caption-close"></app-icon></button>
			</header>
			<div class="frame">
				<div class="top"></div>
				<div class="left"></div>
				<div class="canvas">
					<well-schematic></well-schematic>
					<view-navigator></view-navigator>
				</div>
				<scroll-strip></scroll-strip>
				<div class="right"></div>
			</div>`;
	}
}
customElements.define('schematic-editor', SchematicEditor);

class PropertyPanel extends HTMLElement {
	constructor() {
		super();
		this.attachShadow({ mode: 'open' });
		const rows = ['C', 'S', 'In', 'C', 'D', 'S', 'L', 'D', 'D', 'P', 'D'];
		const row = (text, cls = '') => `<div class="row ${cls}"><span>${text}</span></div>`;

		this.shadowRoot.innerHTML = `
			<style>
				:host { display: flex; flex-direction: column; background: #e8e8e8; font-size: 34px; line-height: 44px; color: #444; overflow: hidden; white-space: nowrap; }
				:host > * { flex: none; box-sizing: border-box; }
				h2 { margin: 0; height: 62px; padding: 9px 12px; font-size: 34px; font-weight: 400; color: #eef2fa; background: linear-gradient(#667ca3, #4f6a99); border-radius: 6px 0 0 0; }
				.node { display: flex; align-items: center; gap: 14px; height: 64px; padding-left: 16px; border-bottom: 3px solid #8c8c8c; background: #f0f0f0; color: #222; }
				.dot { width: 25px; height: 21px; border-radius: 50%; background: #00f; flex: none; }
				.blank { height: 120px; }
				.section { height: 199px; padding: 18px 0 0 53px; background: linear-gradient(#f4f4f4, #e8e8e8 50px); }
				.section.second { height: 206px; padding-top: 22px; }
				.row { height: 69px; margin-left: 45px; padding: 13px 0 0 20px; background: #fff; border-bottom: 3px solid #eee; }
				.dim { color: #888; height: 67px; border: 0; }
				.mid { color: #444; }
				.group { display: flex; align-items: center; gap: 30px; height: 64px; padding-left: 10px; background: linear-gradient(#f4f4f4, #e8e8e8); color: #111; font-weight: 700; }
				app-icon { width: 20px; height: 20px; }
				.split { height: 15px; margin-top: 6px; border-top: 3px solid #999; border-bottom: 3px solid #999; }
				h3 { margin: 0; padding: 18px 0 0 18px; font-size: 34px; color: #111; }
			</style>
			<h2>Prop</h2>
			<div class="node"><span class="dot"></span>Ni</div>
			<div class="blank"></div>
			<div class="section"><app-icon name="tri-open"></app-icon></div>
			${row('N', 'dim')}
			<div class="section second"><app-icon name="tri-open"></app-icon></div>
			${row('T', 'dim mid')}
			<div class="group"><app-icon name="tri-open"></app-icon>En</div>
			${rows.map((text) => row(text)).join('')}
			<div class="split"></div>
			<h3>Draw</h3>`;
	}
}
customElements.define('property-panel', PropertyPanel);

class SepalApp extends HTMLElement {
	constructor() {
		super();
		this.attachShadow({ mode: 'open' });
		this.shadowRoot.innerHTML = `
			<style>
				:host { display: block; height: 100vh; padding: 55px 0 0 55px; box-sizing: border-box; background: #565656; border-radius: 80px 0 0 0; }
				.window { display: flex; flex-direction: column; height: 100%; overflow: hidden; border-radius: 28px 0 0 0; background: #415577; }
				ribbon-bar { flex: none; }
				.workspace { flex: 1; min-height: 0; display: grid; grid-template-columns: 873px 1fr 82px; gap: 15px; padding-top: 14px; }
				.workspace > * { min-height: 0; }
			</style>
			<div class="window">
				<ribbon-bar></ribbon-bar>
				<div class="workspace">
					<asset-explorer></asset-explorer>
					<schematic-editor></schematic-editor>
					<property-panel></property-panel>
				</div>
			</div>`;
	}
}
customElements.define('sepal-app', SepalApp);
</script>
</body>
</html>
